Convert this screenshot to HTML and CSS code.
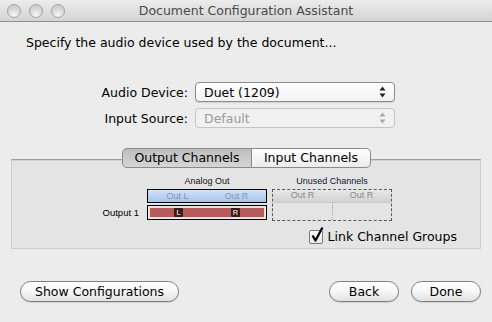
FILE: index.html
```html
<!DOCTYPE html>
<html>
<head>
<meta charset="utf-8">
<link rel="stylesheet" href="styles.css">
</head>
<body>
<div class="window">
  <div class="titlebar">
    <div class="lights"><span class="light"></span><span class="light"></span><span class="light"></span></div>
    <div class="title">Document Configuration Assistant</div>
    <div></div>
  </div>
  <div class="intro">Specify the audio device used by the document...</div>
  <div class="form">
    <div class="label">Audio Device:</div>
    <div class="popup"><span class="popup-text">Duet (1209)</span>
      <svg class="arrows" width="7" height="12" viewBox="0 0 7 12"><path d="M0.5 4.5 L3.5 0.5 L6.5 4.5 Z M0.5 7.5 L3.5 11.5 L6.5 7.5 Z" fill="#222"/></svg>
    </div>
    <div class="label">Input Source:</div>
    <div class="popup disabled"><span class="popup-text">Default</span>
      <svg class="arrows" width="7" height="12" viewBox="0 0 7 12"><path d="M0.5 4.5 L3.5 0.5 L6.5 4.5 Z M0.5 7.5 L3.5 11.5 L6.5 7.5 Z" fill="#aaa"/></svg>
    </div>
  </div>
  <div class="tabs">
    <div class="segmented">
      <div class="seg selected">Output Channels</div>
      <div class="seg">Input Channels</div>
    </div>
    <div class="tabbox">
      <div class="chgrid">
        <div class="rowlabels">
          <div class="rowlabel">Output 1</div>
        </div>
        <div class="group">
          <div class="gtitle">Analog Out</div>
          <div class="ghead blue"><span>Out L</span><span>Out R</span></div>
          <div class="selrow"><div class="redfill"><span class="cell"><b class="badge">L</b></span><span class="cell"><b class="badge">R</b></span></div></div>
        </div>
        <div class="group unused">
          <div class="gtitle">Unused Channels</div>
          <div class="dashbox">
            <div class="ghead gray"><span>Out R</span><span>Out R</span></div>
            <div class="emptyrow"><span></span><span class="divided"></span></div>
          </div>
        </div>
      </div>
      <div class="checkrow">
        <span class="checkbox"><svg width="16" height="18" viewBox="0 0 16 18"><path d="M3.5 9.5 L6.5 14.5 L13.5 1.5" fill="none" stroke="#000" stroke-width="2.2" stroke-linejoin="round"/></svg></span>
        <span>Link Channel Groups</span>
      </div>
    </div>
  </div>
  <div class="buttons">
    <div class="btn wide">Show Configurations</div>
    <div class="spacer"></div>
    <div class="btn">Back</div>
    <div class="btn">Done</div>
  </div>
</div>
</body>
</html>
```

FILE: styles.css
```css
* { box-sizing: border-box; }
html, body { margin: 0; padding: 0; }
body {
  width: 492px; height: 322px; overflow: hidden;
  background: #ececec;
  font-family: "DejaVu Sans", sans-serif;
  font-size: 12.5px;
  color: #000;
}
.window { width: 492px; height: 322px; display: flex; flex-direction: column; }

.titlebar {
  height: 22px; flex: none;
  border-bottom: 1px solid #8f8f8f;
  background: linear-gradient(#ececec, #d3d3d3);
  display: grid; grid-template-columns: 1fr auto 1fr; align-items: center;
}
.lights { display: flex; gap: 8px; padding-left: 7px; }
.light {
  width: 14px; height: 14px; border-radius: 50%;
  border: 1px solid #a4a4a4;
  background: radial-gradient(circle at 50% 85%, #fafafa 0%, #dcdcdc 45%, #c2c2c2 100%);
}
.title { color: #4a4a4a; font-size: 12.5px; line-height: 15px; }

.intro { margin: 13px 0 0 26px; line-height: 15px; }

.form {
  display: grid; grid-template-columns: 188px 200px;
  column-gap: 7px; row-gap: 6px; margin-top: 32px; align-items: center;
}
.label { text-align: right; line-height: 15px; }
.popup {
  height: 20px; border: 1px solid #8c8c8c; border-radius: 4px;
  background: linear-gradient(#ffffff, #f2f2f2);
  box-shadow: 0 1px 1px rgba(0,0,0,0.12);
  display: flex; align-items: center; justify-content: space-between;
  padding: 0 8px 0 8px;
}
.popup.disabled { border-color: #c4c4c4; background: #f1f1f1; box-shadow: none; color: #9a9a9a; }
.arrows { display: block; }

.tabs { margin-top: 20px; display: flex; flex-direction: column; }
.segmented { display: flex; justify-content: center; position: relative; z-index: 1; margin-bottom: -9px; margin-left: 1px; }
.seg {
  height: 20px; line-height: 18px; border: 1px solid #8a8a8a;
  background: linear-gradient(#ffffff, #ebebeb);
  font-size: 12.5px; text-align: center;
}
.seg.selected {
  width: 130px; border-radius: 5px 0 0 5px;
  background: linear-gradient(#bdbdbd, #d6d6d6);
}
.seg + .seg { width: 119px; border-left: none; border-radius: 0 5px 5px 0; }

.tabbox {
  margin: 0 11px; height: 90px;
  border: 1px solid #cdcdcd; border-top-color: #9d9d9d;
  background: #e4e4e4;
  box-shadow: inset 0 1px 0 #cfcfcf;
  padding-top: 16px;
}
.chgrid { display: flex; align-items: flex-start; font-family: "Liberation Sans", sans-serif; font-size: 9px; }
.rowlabels { width: 135px; padding-right: 8px; padding-top: 29px; text-align: right; }
.rowlabel { line-height: 15px; height: 15px; font-size: 9.5px; }
.group { width: 120px; display: flex; flex-direction: column; }
.group.unused { margin-left: 5px; }
.gtitle { height: 13px; line-height: 11px; text-align: center; color: #111; }
.unused .gtitle { color: #0f1830; }
.ghead { height: 14px; display: flex; line-height: 12px; }
.ghead span { flex: 1; text-align: center; }
.ghead.blue {
  border: 1px solid #000;
  background: linear-gradient(#d3e3f7, #a6c5ee);
  color: #8093ad;
}
.selrow { margin-top: 2px; height: 15px; border: 1px solid #000; padding: 1px; background: #ececec; }
.redfill { height: 11px; border: 1px solid #eee3a4; background: #b55b5b; display: flex; }
.cell { flex: 1; display: flex; justify-content: center; }
.badge {
  width: 9px; height: 9px; background: #3a1e1e; color: #fff;
  font-size: 7.5px; line-height: 9px; text-align: center; border-radius: 1px;
  font-weight: normal;
}
.dashbox { height: 32px; border: 1px dashed #5a5a5a; display: flex; flex-direction: column; }
.ghead.gray {
  height: 13px; background: linear-gradient(#e8e8e8, #d2d2d2); color: #8a8a8a;
  border-bottom: 1px solid #c9c9c9; line-height: 11px;
}
.emptyrow { flex: 1; display: flex; }
.emptyrow span { flex: 1; }
.emptyrow .divided { border-left: 1px dotted #a8a8a8; }

.checkrow { display: flex; align-items: center; gap: 5px; justify-content: flex-end; padding-right: 23px; margin-top: 8px; line-height: 15px; }
.checkbox {
  width: 14px; height: 14px; border: 1px solid #7a7a7a; border-radius: 2px;
  background: linear-gradient(#ffffff, #e6e6e6); position: relative;
}
.checkbox svg { position: absolute; left: -1px; top: -5px; }

.buttons { display: flex; margin-top: 32px; padding: 0 11px 0 20px; gap: 12px; }
.spacer { flex: 1; }
.btn {
  height: 21px; width: 70px; border: 1px solid #7e7e7e; border-radius: 11px;
  background: linear-gradient(#ffffff 0%, #f6f6f6 50%, #e2e2e2 100%);
  box-shadow: 0 1px 1px rgba(0,0,0,0.12);
  text-align: center; line-height: 19px;
}
.btn.wide { width: 159px; }
```
